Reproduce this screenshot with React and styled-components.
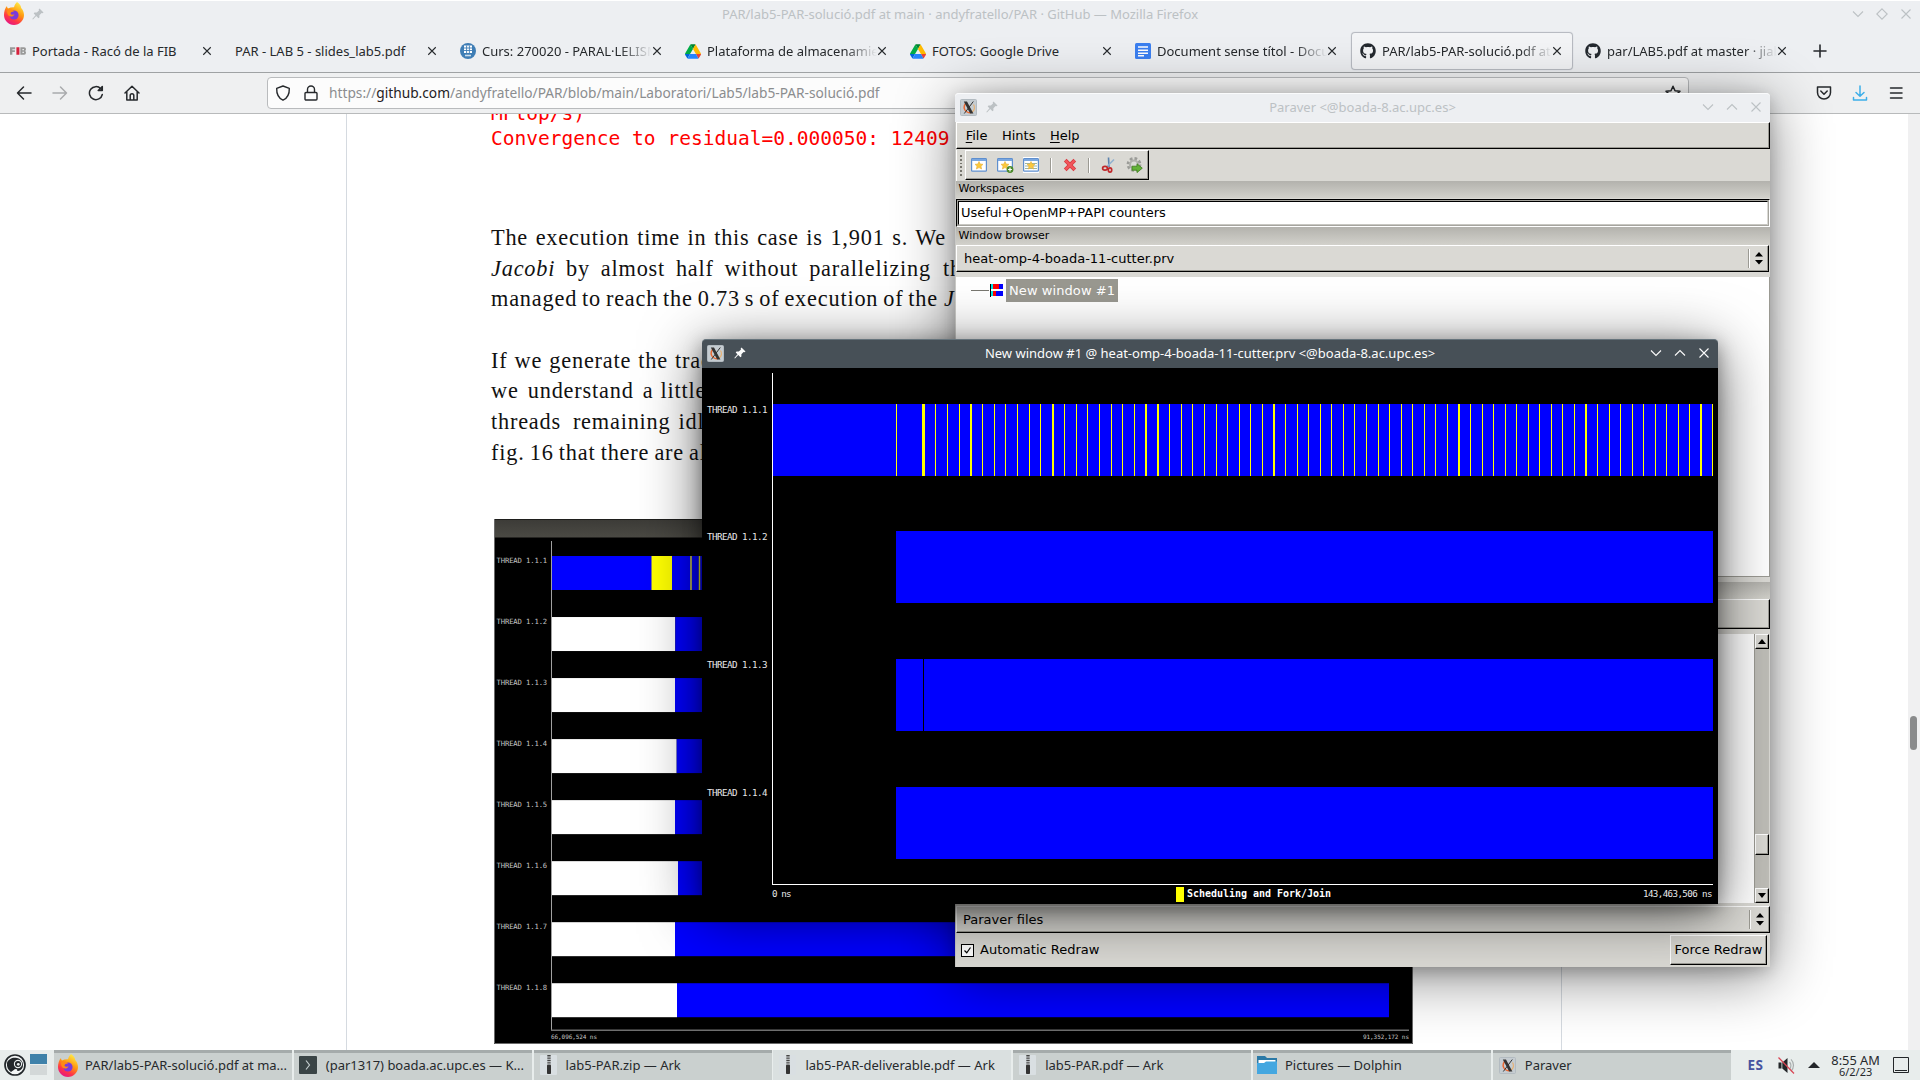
import React from "react";
import styled, { createGlobalStyle, css } from "styled-components";
import { FaGithub } from "react-icons/fa";

const Global = createGlobalStyle`
  *, *::before, *::after { box-sizing: border-box; }
  body { margin: 0; background: #fff; overflow: hidden; }
  svg { display: block; flex: none; }
`;

const sans = `"Noto Sans", "Open Sans", sans-serif`;
const dejavu = `"DejaVu Sans", sans-serif`;
const mono = `"DejaVu Sans Mono", monospace`;
const paper = "#dad9d4";

/* ---------- desktop ---------- */

const Desktop = styled.div`
  position: relative;
  width: 1920px;
  height: 1080px;
  overflow: hidden;
  display: flex;
  flex-direction: column;
  font: 13px/18px ${sans};
  color: #26292c;
  white-space: nowrap;
`;

/* ---------- browser ---------- */

const Browser = styled.div`
  height: 1050px;
  display: flex;
  flex-direction: column;
  background: #eff0f1;
`;

const BrowserTitle = styled.div`
  height: 30px;
  display: grid;
  grid-template-columns: 240px 1fr 236px;
  align-items: center;
  border-top: 1px solid #fff;
  background: #edeff2;
  padding: 0 8px 4px 4px;
  color: #bcc1c4;
  text-align: center;
`;

const TitleIcons = styled.div`
  display: flex;
  align-items: center;
  gap: ${(p) => p.$gap || 8}px;
  justify-content: ${(p) => (p.$end ? "flex-end" : "flex-start")};
`;

const TabStrip = styled.div`
  height: 43px;
  display: flex;
  padding: 2px 0 2px 1px;
  background: #edeff2;
  border-bottom: 1px solid #9fa2a4;
`;

const Tab = styled.div`
  width: 225px;
  height: 38px;
  flex: none;
  padding: 0 3px 0 9px;
  display: flex;
  align-items: center;
  gap: 6px;
  ${(p) =>
    p.$active &&
    css`
      background: #f3f4f6;
      border-radius: 4px;
      box-shadow: inset 0 0 0 1px #b8bbc2, 0 0 1px #b8bbc2;
      width: 222px;
      margin-right: 3px;
      padding-right: 0;
    `}
`;

const NewTab = styled.div`
  height: 38px;
  padding-left: 11px;
  display: flex;
  align-items: center;
`;

const TabLabel = styled.span`
  width: ${(p) => (p.$wide ? 192 : 170)}px;
  flex: none;
  overflow: hidden;
  ${(p) =>
    p.$fade &&
    css`
      mask-image: linear-gradient(to right, #000 138px, transparent 170px);
    `}
`;

const TabClose = styled.span`
  display: flex;
  width: 12px;
  margin-left: -6px;
`;

const NavBar = styled.div`
  height: 41px;
  display: flex;
  align-items: center;
  padding: 0 16px 0 16px;
  border-bottom: 1px solid #b8babb;
`;

const NavButtons = styled.div`
  display: flex;
  gap: 20px;
  width: 251px;
`;

const UrlBar = styled.div`
  width: 1422px;
  height: 32px;
  border: 1px solid #b9bbbd;
  border-radius: 4px;
  background: #fcfcfc;
  display: flex;
  align-items: center;
  gap: 12px;
  padding: 0 7px;
  font-size: 13.73px;
  color: #8b8d8f;
  b { font-weight: 400; color: #1f2123; }
`;

const UrlText = styled.span`
  margin-left: -2px;
`;

const Spring = styled.span`
  flex: 1;
`;

const NavRight = styled.div`
  margin-left: auto;
  display: flex;
  gap: 20px;
`;

const PageRow = styled.div`
  flex: 1;
  min-height: 0;
  display: flex;
  background: #fff;
`;

const Viewer = styled.div`
  width: 1216px;
  margin-left: 346px;
  padding-left: 144px;
  border: solid #d5dae0;
  border-width: 0 1px;
  overflow: hidden;
  display: flex;
  flex-direction: column;
`;

const ScrollTrack = styled.div`
  margin-left: auto;
  width: 12px;
  padding: 602px 3px 0 2px;
  background: #f0f0f1;
`;

const ScrollThumb = styled.div`
  width: 7px;
  height: 34px;
  border-radius: 4px;
  background: #8a8b8c;
`;

const CodeText = styled.div`
  height: 122px;
  margin-top: -13px;
  font: 19.55px/25px ${mono};
  color: #f00;
  flex: none;
`;

const Paragraph = styled.div`
  flex: none;
  margin-bottom: 31px;
  font: 22.3px/30.6px "Liberation Serif", "Times New Roman", serif;
  letter-spacing: 0.8px;
  word-spacing: -3px;
  color: #111;
`;

const Line = styled.div`
  display: flex;
  height: 30.6px;
`;

const Justified = styled.span`
  width: ${(p) => p.$w}px;
  flex: none;
  white-space: normal;
  text-align: justify;
  text-align-last: justify;
`;

const Tail = styled.span`
  margin-left: ${(p) => p.$gap}px;
`;

const Figure = styled.div`
  flex: none;
  width: 919px;
  height: 525px;
  margin: 19.8px 0 0 3px;
`;

/* ---------- shared window frame ---------- */

const Frame = styled.div`
  position: absolute;
  left: ${(p) => p.$x}px;
  top: ${(p) => p.$y}px;
  width: ${(p) => p.$w}px;
  height: ${(p) => p.$h}px;
  border-radius: 4px 4px 0 0;
  display: flex;
  flex-direction: column;
  box-shadow: ${(p) =>
    p.$active
      ? "0 5px 18px rgba(0,0,0,.35), 0 10px 60px rgba(0,0,0,.6)"
      : "0 4px 16px rgba(0,0,0,.2), 0 10px 60px rgba(0,0,0,.48)"};
`;

const FrameTitle = styled.div`
  height: 29px;
  flex: none;
  border-radius: 4px 4px 0 0;
  display: grid;
  grid-template-columns: 100px 1fr 97px;
  align-items: center;
  text-align: center;
  padding: 0 8px 2px 5px;
  background: ${(p) => (p.$active ? "#475057" : "#edeff2")};
  border-top: 1px solid ${(p) => (p.$active ? "#66747c" : "#fafbfc")};
  color: ${(p) => (p.$active ? "#fcfcfc" : "#bcc1c4")};
`;

/* ---------- paraver main window ---------- */

const raised = css`
  border: 1px solid #000;
  border-top-color: #fff;
  border-left-color: #fff;
  box-shadow: inset -1px -1px 0 #9b9a93;
`;

const Client = styled.div`
  flex: 1;
  min-height: 0;
  display: flex;
  flex-direction: column;
  background: ${paper};
  border-left: 1px solid #c9c9c6;
  font: 13px/18px ${dejavu};
  color: #000;
`;

const MenuBar = styled.div`
  height: 27px;
  ${raised}
  display: flex;
  gap: 14.5px;
  align-items: center;
  padding: 1px 0 0 8.7px;
  u { text-underline-offset: 2px; }
`;

const ToolRow = styled.div`
  height: 32px;
  display: flex;
  padding-top: 1px;
`;

const Grip = styled.div`
  width: 9px;
  padding: 5px 3px;
  display: flex;
  flex-direction: column;
  gap: 2px;
  border-left: 1px solid #fff;
`;

const Dot = styled.i`
  width: 2px;
  height: 2px;
  background: #77766f;
`;

const ToolBar = styled.div`
  width: 184px;
  height: 30px;
  ${raised}
  display: flex;
  align-items: center;
`;

const Tool = styled.div`
  width: 26.3px;
  flex: none;
  display: flex;
  justify-content: center;
`;

const ToolSep = styled.div`
  width: 2px;
  height: 15px;
  flex: none;
  margin: 0 5px;
  border-left: 1px solid #9b9a93;
  border-right: 1px solid #fff;
`;

const Caption = styled.div`
  height: ${(p) => p.$h}px;
  flex: none;
  padding: ${(p) => p.$h - 17}px 0 0 2.5px;
  background: linear-gradient(#b3b2ad, #d2d1cb);
  font-size: 11px;
  line-height: 15px;
`;

const Field = styled.div`
  height: 28px;
  flex: none;
  margin-top: 1px;
  border: 1px solid #000;
  border-right-color: #fff;
  border-bottom-color: #fff;
  padding: 1px;
  background: #a5a49e;
`;

const FieldInner = styled.div`
  height: 100%;
  background: #fff;
  border: 1px solid #000;
  border-right-color: ${paper};
  border-bottom-color: #c8c7c2;
  padding: 1px 0 0 2px;
  line-height: 20px;
`;

const Choice = styled.div`
  height: ${(p) => p.$h}px;
  flex: none;
  margin-right: ${(p) => (p.$flush ? 0 : 1)}px;
  ${raised}
  display: flex;
  align-items: center;
  padding: 0 5.5px 0 ${(p) => p.$pad}px;
`;

const ChoiceArrows = styled.div`
  margin-left: auto;
  height: 19px;
  border-left: 1px solid #9b9a93;
  box-shadow: inset 1px 0 0 #fff;
  padding-left: 6px;
  display: flex;
  align-items: center;
`;

const Tree = styled.div`
  height: 300px;
  flex: none;
  margin: 5px 0 5px;
  background: #fff;
  border-right: 1px solid #9b9a93;
  border-bottom: 1px solid #9b9a93;
  padding: 2px 0 0 15px;
`;

const TreeRow = styled.div`
  display: flex;
  align-items: center;
  height: 23px;
`;

const TreeLabel = styled.span`
  height: 23px;
  width: 112px;
  margin-left: 3px;
  padding-left: 3px;
  line-height: 23px;
  letter-spacing: 0.08px;
  background: #999890;
  color: #fff;
`;

const FileList = styled.div`
  height: 269px;
  flex: none;
  margin: 5px 1px 3px 0;
  background: #fff;
  display: flex;
  justify-content: flex-end;
`;

const GtkScroll = styled.div`
  width: 15px;
  display: flex;
  flex-direction: column;
  justify-content: space-between;
  background: #bfbeb8;
  border-left: 1px solid #9b9a93;
`;

const GtkButton = styled.div`
  height: ${(p) => p.$h}px;
  ${raised}
  background: ${paper};
  display: flex;
  align-items: center;
  justify-content: center;
  ${(p) => p.$thumb && css`margin-top: 166px; margin-bottom: 14px;`}
`;

const Footer = styled.div`
  flex: 1;
  display: flex;
  align-items: flex-start;
  padding: 2px 3px 0 5px;
`;

const CheckLabel = styled.div`
  display: flex;
  align-items: center;
  gap: 6px;
  height: 30px;
`;

const CheckBox = styled.div`
  width: 13px;
  height: 13px;
  border: 1px solid #000;
  background: #fff;
  display: flex;
  align-items: center;
  justify-content: center;
`;

const PushButton = styled.div`
  margin-left: auto;
  width: 97px;
  height: 30px;
  ${raised}
  display: flex;
  align-items: center;
  justify-content: center;
`;

/* ---------- taskbar ---------- */

const Taskbar = styled.div`
  height: 30px;
  display: flex;
  background: #e8edec;
`;

const Launcher = styled.div`
  width: 54px;
  display: flex;
  align-items: center;
  gap: 4px;
  padding: 0 0 1px 4px;
`;

const Pager = styled.div`
  display: grid;
  gap: 1px;
  width: 17px;
`;

const Desk = styled.i`
  height: 10px;
  background: ${(p) => (p.$on ? "#3f82aa" : "#d3d8d8")};
`;

const Task = styled.div`
  width: 238px;
  margin-right: 1.8px;
  height: 30px;
  display: flex;
  align-items: center;
  gap: 7px;
  padding: 0 5px 3px 4px;
  flex: none;
  background: ${(p) => (p.$light ? "#dae0e0" : "#cad0cf")};
  border-top: 3px solid ${(p) => (p.$light ? "#dae0e0" : "#a5abab")};
`;

const TaskIcon = styled.span`
  width: 21px;
  display: flex;
  justify-content: center;
`;

const Tray = styled.div`
  flex: 1;
  display: flex;
  align-items: center;
  padding-left: 15px;
  b { color: #4653a0; width: 30px; font-size: 13.5px; letter-spacing: 0.4px; }
`;

const Expander = styled.svg`
  margin-left: 13px;
`;

const Clock = styled.div`
  width: 58px;
  margin: 0 8px 0 7px;
  text-align: center;
  font-size: 12.8px;
  line-height: 13px;
  small { display: block; font-size: 11px; line-height: 10px; }
`;

/* ---------- icons ---------- */

const Firefox = ({ s = 20 }) => (
  <svg width={s} height={s * 1.15} viewBox="0 0 20 23">
    <defs>
      <linearGradient id="fx" x1="0.8" y1="0" x2="0.3" y2="1">
        <stop offset="0" stopColor="#fff44f" />
        <stop offset="0.45" stopColor="#ff980e" />
        <stop offset="0.75" stopColor="#ff3647" />
        <stop offset="1" stopColor="#e31587" />
      </linearGradient>
    </defs>
    <path fill="url(#fx)" d="M13 0c3 2 4 4 4.200 6C19 8 20 10.500 20 13c0 5.500-4.500 10-10 10S0 18.500 0 13c0-3.500 1-7 3-9 0 1 .5 2 1 2.500C6 5.500 8 5 10 5.200 10.500 3 11.500 1.500 13 0z" />
    <circle cx="10" cy="13" r="4.600" fill="#7a3bdc" />
    <path fill="#ff8a16" d="M3 9c2-2 5-2 7 .5-2 0-3.500.8-3.500 2.200 1 1.300 3 1 4 .6-1 2.500-4 3-6 1.200C3.500 12.500 3 10.500 3 9z" />
  </svg>
);

const Pin = ({ c = "#bcc1c4" }) => (
  <svg width="12" height="12" viewBox="0 0 12 12" fill={c}>
    <path d="M7.500 0.500 11.500 4.500 10.500 5.300 9.600 5 7.400 7.200 7.400 9.600 6.500 10.300 4.200 8 1 11.500 0.300 11 3.500 7.300 1.700 5.500 2.500 4.600 4.800 4.600 7 2.400 6.700 1.400z" />
  </svg>
);

const Glyph = ({ d, c = "#bcc1c4", s = 12, w = 1.1 }) => (
  <svg width={s} height={s} viewBox="0 0 12 12" fill="none" stroke={c} strokeWidth={w}>
    <path d={d} />
  </svg>
);
const DOWN = "M1 3.500 6 8.500 11 3.500";
const UP = "M1 8.500 6 3.500 11 8.500";
const CROSS = "M1.500 1.500 10.500 10.500M10.500 1.500 1.500 10.500";
const DIAMOND = "M6 0.800 11.200 6 6 11.200 0.800 6z";

const XLogo = () => (
  <svg width="17" height="17" viewBox="0 0 17 17">
    <rect x="0.500" y="0.500" width="16" height="16" rx="1" fill="#c5ccd1" stroke="#b3bbc1" />
    <path d="M7 3.500A5 5 0 1 0 12 13" fill="none" stroke="#ea6a35" strokeWidth="1.500" />
    <path d="M13.500 5.500a5.200 5.200 0 0 1-1.500 7.500" fill="none" stroke="#e9b070" strokeWidth="1.200" />
    <path d="M3.800 2.500h3.200l6.400 12h-3.200z" fill="#333" />
    <path d="M13.300 2.500 4.300 14.500" stroke="#333" strokeWidth="1" />
  </svg>
);

const Fib = () => (
  <svg width="16" height="8" viewBox="0 0 17 8">
    <path fill="#999" d="M0 0h5.500v2.200H2.500v.9h2.700V5H2.500v3H0zM11 0h4q2 0 2 2 0 1.300-.8 1.900.8.6.8 2 0 2.100-2 2.100h-4zM13.200 1.900v1.200h1.600V1.900zM13.200 4.900v1.300h1.600V4.900z" fillRule="evenodd" />
    <path fill="#d6213c" d="M6.800 0h3.200v8H6.800z" />
  </svg>
);

const Upc = () => (
  <svg width="16" height="16" viewBox="0 0 16 16">
    <circle cx="8" cy="8" r="8" fill="#3e7db5" />
    <path d="M4 2.500h8v7.500H4z" fill="#fff" />
    <path d="M6.600 2.500v7.500M9.400 2.500v7.500M4 5h8M4 7.500h8" stroke="#3e7db5" strokeWidth="0.900" />
    <path d="M5 12.500h6" stroke="#c9dceb" strokeWidth="1.600" />
  </svg>
);

const Drive = () => (
  <svg width="16" height="15" viewBox="0 0 87.300 78">
    <path d="m6.600 66.850 3.850 6.650c.8 1.400 1.950 2.500 3.300 3.300l13.750-23.800h-27.500c0 1.550.4 3.100 1.200 4.500z" fill="#0066da" />
    <path d="m43.650 25-13.750-23.800c-1.350.8-2.500 1.900-3.300 3.300l-25.400 44a9.060 9.060 0 0 0-1.200 4.500h27.500z" fill="#00ac47" />
    <path d="m73.550 76.800c1.350-.8 2.500-1.900 3.300-3.300l1.600-2.750 7.650-13.250c.8-1.400 1.200-2.950 1.200-4.500h-27.500l5.850 11.500z" fill="#ea4335" />
    <path d="m43.650 25 13.750-23.800c-1.350-.8-2.900-1.200-4.500-1.200h-18.500c-1.600 0-3.150.45-4.500 1.200z" fill="#00832d" />
    <path d="m59.800 53h-32.300l-13.750 23.800c1.350.8 2.900 1.200 4.500 1.200h50.800c1.600 0 3.150-.45 4.500-1.200z" fill="#2684fc" />
    <path d="m73.400 26.500-12.700-22c-.8-1.400-1.950-2.500-3.300-3.300l-13.750 23.800 16.150 28h27.450c0-1.550-.4-3.100-1.200-4.500z" fill="#ffba00" />
  </svg>
);

const Docs = () => (
  <svg width="16" height="16" viewBox="0 0 16 16">
    <rect width="16" height="16" rx="1.500" fill="#3b7ff0" />
    <path d="M3 4h10M3 7.200h10M3 10.200h10M3 12.800h6" stroke="#fff" strokeWidth="1.500" />
  </svg>
);

const Stroke = ({ children, c = "#26292c", w = 16, h = 16, sw = 1.5 }) => (
  <svg width={w} height={h} viewBox="0 0 16 16" fill="none" stroke={c} strokeWidth={sw} strokeLinecap="round" strokeLinejoin="round">
    {children}
  </svg>
);

const UpDown = () => (
  <svg width="8" height="13" viewBox="0 0 8 13">
    <path d="M0 4.500 4 0l4 4.500zM0 8h8l-4 4.500z" />
  </svg>
);

const Caret = ({ up }) => (
  <svg width="8" height="5" viewBox="0 0 8 5">
    <path d={up ? "M0 5h8L4 0z" : "M0 0h8L4 5z"} />
  </svg>
);

const STAR = "M8 4.500 9.200 7 12 7.300 10 9.200 10.600 12 8 10.600 5.400 12 6 9.200 4 7.300 6.800 7z";

const WindowIcon = ({ plus, framed }) => (
  <svg width="17" height="16" viewBox="0 0 17 16">
    {framed && <path d="M0 0h16v16H0z" fill="#fff" />}
    <rect x="0.600" y="1.600" width="14.800" height="12.600" rx="0.800" fill="#fff" stroke="#5f8fce" strokeWidth="1.200" />
    <path d="M1 2h14v2H1z" fill="#7aa7e0" />
    {framed && <path d="M2 6.500h12M2 9h12M2 11.500h12" stroke="#9db7a0" strokeWidth="1" />}
    <path d={STAR} fill="#fbc93c" stroke="#e6ae3c" strokeWidth="0.600" />
    {plus && <circle cx="13" cy="12.500" r="3.400" fill="#4b8a2a" />}
    {plus && <path d="M13 10.600v3.800M11.100 12.500h3.800" stroke="#fff" strokeWidth="1.200" />}
  </svg>
);

const RedX = () => (
  <svg width="14" height="14" viewBox="0 0 14 14">
    <path d="M2.200 2.200 11.800 11.800M11.800 2.200 2.200 11.800" stroke="#d93a40" strokeWidth="3.800" />
    <path d="M2.500 2.500 11.500 11.500M11.500 2.500 2.500 11.500" stroke="#f2575c" strokeWidth="2.200" />
  </svg>
);

const Scissors = () => (
  <svg width="15" height="16" viewBox="0 0 15 16" fill="none">
    <path d="M7.500 0.500 8 10" stroke="#5c83ae" strokeWidth="1.600" />
    <path d="M13 2.500 6 9.500" stroke="#8fb0cf" strokeWidth="1.600" />
    <ellipse cx="4" cy="11.300" rx="2.400" ry="1.900" stroke="#c0282b" strokeWidth="1.700" />
    <ellipse cx="9" cy="13" rx="1.700" ry="2.100" stroke="#c0282b" strokeWidth="1.700" />
  </svg>
);

const Gear = () => (
  <svg width="17" height="16" viewBox="0 0 17 16">
    <circle cx="8" cy="7.500" r="5.900" fill="none" stroke="#9b9c98" strokeWidth="3" strokeDasharray="2.600 2" />
    <circle cx="8" cy="7.500" r="4" fill="#dcdcd8" stroke="#b0b1ac" strokeWidth="2.200" />
    <path d="M6 9.200h5V6.800l5.300 4.400-5.300 4.400v-2.400H6z" fill="#63b238" stroke="#3c7c1d" strokeWidth="0.800" />
  </svg>
);

const TreeMark = () => (
  <svg width="32" height="13" viewBox="0 0 32 13" shapeRendering="crispEdges">
    <path d="M0 6h18v1H0z" fill="#77766f" />
    <path d="M19 0h1v13h-1z" fill="#000" />
    <path d="M20 0h2v5h-2zM20 7h2v5h-2z" fill="#00e5e5" />
    <path d="M22 0h6v5h-6zM22 7h3v5h-3z" fill="#f00" />
    <path d="M28 0h4v5h-4zM25 7h7v5h-7z" fill="#00f" />
  </svg>
);

const Zip = () => (
  <svg width="17" height="20" viewBox="0 0 17 20">
    <rect width="17" height="20" rx="1" fill="#d9dfe2" />
    <path d="M9 0v12" stroke="#444" strokeWidth="3.400" strokeDasharray="1.400 1" />
    <rect x="7" y="10" width="4" height="9" rx="0.800" fill="#333" />
  </svg>
);

const Konsole = () => (
  <svg width="18" height="18" viewBox="0 0 18 18">
    <rect width="18" height="18" rx="1" fill="#3a4446" />
    <path d="M7 4.500 10.500 9 7 13.500" fill="none" stroke="#c3cccd" strokeWidth="1.200" />
  </svg>
);

const Folder = () => (
  <svg width="20" height="18" viewBox="0 0 20 18">
    <path d="M0 0h8l2 2h10v8H0z" fill="#2b79a6" />
    <path d="M1.500 4h17v5h-17z" fill="#fff" />
    <path d="M0 7h7l2-1.500h11V18H0z" fill="#44a7e0" />
  </svg>
);

const Gecko = () => (
  <svg width="22" height="22" viewBox="0 0 22 22">
    <circle cx="11" cy="11" r="10" fill="#f3f6f6" stroke="#22272a" strokeWidth="1.700" />
    <path d="M3 9c1-4 6-6 10-5 3 .5 6 3 6 7 0 4-3 6-6 6 1-1 0-2-1-2-2 0-3 2-5 3-3-2-4.500-5-4-9z" fill="#22272a" />
    <circle cx="14" cy="10" r="3.600" fill="none" stroke="#e9eeee" strokeWidth="1.100" />
    <circle cx="14.300" cy="10.300" r="1.400" fill="#e9eeee" />
  </svg>
);

const Muted = () => (
  <svg width="17" height="17" viewBox="0 0 17 17">
    <path d="M0.500 5.500h3v6h-3zM4.300 5.500 9.500 1v15L4.300 11.500z" fill="#232629" />
    <path d="M11.500 5a5 5 0 0 1 0 7M13 2.300a8.500 8.500 0 0 1 0 12" fill="none" stroke="#a9aeae" strokeWidth="1.200" />
    <path d="M0.500 0.500 16 16.500" stroke="#da4453" strokeWidth="1.200" />
  </svg>
);

/* ---------- charts ---------- */

const forkJoin = [
  896, [922, 3], 935, 947, 959, [970, 2], 982, 994, 1005, 1017, 1029, 1040, [1052, 2], 1064, 1076, 1087, 1099, 1111,
  1122, 1134, [1145, 2], [1157, 2], 1169, 1181, 1192, 1204, 1216, 1227, 1239, 1250, 1262, [1273, 2], 1285, 1297, 1308,
  1320, 1331, 1343, 1354, 1366, 1378, 1389, 1401, 1412, 1424, 1435, 1447, [1458, 2], 1470, 1482, 1493, 1505, 1516,
  1528, 1539, 1551, 1562, 1574, [1585, 2], 1597, 1609, 1620, 1632, 1643, 1655, 1666, 1678, 1689, [1700, 2], 1712,
].map((v) => (Array.isArray(v) ? v : [v, 1]));

const Plot = styled.svg`
  font-family: ${mono};
  text { white-space: pre; }
`;

const Timeline = () => (
  <Plot width="1016" height="536" viewBox="702 368 1016 536">
    <rect x="702" y="368" width="1016" height="536" fill="#000" />
    <g fill="#e8e8e8" fontSize="9.200">
      {[412.5, 540, 667.8, 795.6].map((y, i) => (
        <text key={y} x="707" y={y} textLength="60.500">{`THREAD 1.1.${i + 1}`}</text>
      ))}
      <text x="772" y="897" textLength="19.500">0 ns</text>
      <text x="1643" y="897" textLength="69.500">143,463,506 ns</text>
    </g>
    <g shapeRendering="crispEdges">
      <rect x="773" y="404" width="940" height="72" fill="#00f" />
      {forkJoin.map(([x, w]) => (
        <rect key={x} x={x} y="404" width={w} height="72" fill="#ff0" />
      ))}
      {[531, 659, 787].map((y) => (
        <rect key={y} x="896" y={y} width="817" height="72" fill="#00f" />
      ))}
      <rect x="923" y="659" width="1" height="72" fill="#000" />
      <path d="M772 373h1v511h940v1H772z" fill="#fff" />
      <rect x="1176" y="887" width="8" height="15" fill="#ff0" />
    </g>
    <text x="1187" y="897" fill="#fff" fontSize="10" fontWeight="700" textLength="144">Scheduling and Fork/Join</text>
  </Plot>
);

const idle = [0, 675.3, 675, 676.7, 675, 678, 675, 677];

const OldTrace = () => (
  <Plot width="919" height="525" viewBox="494 519 919 525">
    <defs>
      <linearGradient id="hd" x1="0" y1="0" x2="0" y2="1">
        <stop offset="0" stopColor="#3c3b37" />
        <stop offset="1" stopColor="#4b4a44" />
      </linearGradient>
    </defs>
    <rect x="494" y="519" width="919" height="525" fill="#000" />
    <rect x="494" y="519.500" width="919" height="18" fill="url(#hd)" />
    <path d="M494.500 519v524.500h918V537" fill="none" stroke="#6a6a6a" />
    {idle.map((x, i) => {
      const y = 556 + i * 61.03;
      return (
        <g key={i}>
          <text x="496.500" y={y + 6.5} fontSize="7.200" fill="#c4c4c4" textLength="50.700">{`THREAD 1.1.${i + 1}`}</text>
          {i > 0 && <rect x="552" y={y} width={x - 552} height="34" fill="#fff" />}
          <rect x={i ? x : 552} y={y} width={1389 - (i ? x : 552)} height="34" fill="#00f" />
        </g>
      );
    })}
    <rect x="651.500" y="556" width="20.500" height="34" fill="#ff0" />
    <path d="M691 556v34M699.500 556v34" stroke="#f4f020" strokeWidth="1.400" />
    <path d="M551.500 541v489.500" stroke="#a0a0a0" />
    <path d="M551 1030.200H1409" stroke="#6e6e6e" strokeWidth="1.600" />
    <text x="551" y="1038.800" fontSize="6" fill="#c8c8c8" textLength="46">66,096,524 ns</text>
    <text x="1363" y="1038.800" fontSize="6" fill="#c8c8c8" textLength="46">91,352,172 ns</text>
  </Plot>
);

/* ---------- page ---------- */

const tabs = [
  { icon: <Fib />, label: "Portada - Racó de la FIB" },
  { label: "PAR - LAB 5 - slides_lab5.pdf" },
  { icon: <Upc />, label: "Curs: 270020 - PARAL·LELISM", fade: true },
  { icon: <Drive />, label: "Plataforma de almacenamien", fade: true },
  { icon: <Drive />, label: "FOTOS: Google Drive" },
  { icon: <Docs />, label: "Document sense títol - Docum", fade: true },
  { icon: <FaGithub size={16} color="#24292f" />, label: "PAR/lab5-PAR-solució.pdf at m", fade: true, active: true },
  { icon: <FaGithub size={16} color="#24292f" />, label: "par/LAB5.pdf at master · jiab", fade: true },
];

const tasks = [
  { icon: <Firefox s={20} />, label: "PAR/lab5-PAR-solució.pdf at ma..." },
  { icon: <Konsole />, label: "(par1317) boada.ac.upc.es — K..." },
  { icon: <Zip />, label: "lab5-PAR.zip — Ark" },
  { icon: <Zip />, label: "lab5-PAR-deliverable.pdf — Ark", light: true },
  { icon: <Zip />, label: "lab5-PAR.pdf — Ark" },
  { icon: <Folder />, label: "Pictures — Dolphin" },
  { icon: <XLogo />, label: "Paraver" },
];

const FrameButtons = ({ c }) => (
  <TitleIcons $end $gap={12}>
    <Glyph d={DOWN} c={c} />
    <Glyph d={UP} c={c} />
    <Glyph d={CROSS} c={c} />
  </TitleIcons>
);

const FirefoxWindow = () => (
  <Browser>
    <BrowserTitle>
      <TitleIcons $gap={8}><Firefox s={20} /><Pin /></TitleIcons>
      <span>PAR/lab5-PAR-solució.pdf at main · andyfratello/PAR · GitHub — Mozilla Firefox</span>
      <TitleIcons $end $gap={12}>
        <Glyph d={DOWN} /><Glyph d={DIAMOND} /><Glyph d={CROSS} />
      </TitleIcons>
    </BrowserTitle>
    <TabStrip>
      {tabs.map((t) => (
        <Tab key={t.label} $active={t.active}>
          {t.icon}
          <TabLabel $fade={t.fade} $wide={!t.icon}>{t.label}</TabLabel>
          <TabClose><Glyph d={CROSS} c="#26292c" s={10} w={1.3} /></TabClose>
        </Tab>
      ))}
      <NewTab><Stroke sw={1.6}><path d="M8 2v12M2 8h12" /></Stroke></NewTab>
    </TabStrip>
    <NavBar>
      <NavButtons>
        <Stroke><path d="M15 8H1.500M7.500 2 1.500 8l6 6" /></Stroke>
        <Stroke c="#a9abad"><path d="M1 8h13.500M8.500 2l6 6-6 6" /></Stroke>
        <Stroke><path d="M14.300 9.500A6.500 6.500 0 1 1 12.800 3.800L14 5M14.300 1.500V5.500H10.200z" /></Stroke>
        <Stroke><path d="M1 8 8 1.200 15 8M2.800 6.800V15h10.400V6.800M6.200 15v-4.500a1.800 1.800 0 0 1 3.600 0V15" /></Stroke>
      </NavButtons>
      <UrlBar>
        <Stroke sw={1.4}><path d="M8 1 14.300 3.400C14.500 9 12.500 13 8 15.200 3.500 13 1.500 9 1.700 3.400z" /></Stroke>
        <Stroke sw={1.4}><path d="M3 7.500h10a1 1 0 0 1 1 1V14a1 1 0 0 1-1 1H3a1 1 0 0 1-1-1V8.500a1 1 0 0 1 1-1zM4.500 7.500V4.500a3.500 3.500 0 0 1 7 0V7.500" /></Stroke>
        <UrlText>https://<b>github.com</b>/andyfratello/PAR/blob/main/Laboratori/Lab5/lab5-PAR-solució.pdf</UrlText>
        <Spring />
        <Stroke><path d="M8 1.300 10 5.800l5 .5-3.700 3.300 1.100 4.900L8 12l-4.400 2.500 1.100-4.900L1 6.300l5-.5z" /></Stroke>
      </UrlBar>
      <NavRight>
        <Stroke><path d="M1.500 2h13v5.500a6.500 6.500 0 0 1-13 0zM4.800 6 8 9.200 11.200 6" /></Stroke>
        <Stroke c="#3daee9"><path d="M8 1v10M4 7.500 8 11.300l4-3.800M1.500 12.500V15h13v-2.500" /></Stroke>
        <Stroke><path d="M2.500 3h11.500M2.500 8h11.500M2.500 13h11.500" /></Stroke>
      </NavRight>
    </NavBar>
    <PageRow>
      <Viewer>
        <CodeText>
          <div>MFlop/s)</div>
          <div>Convergence to residual=0.000050: 12409</div>
        </CodeText>
        <Paragraph>
          <Line><Justified $w={455}>The execution time in this case is 1,901 s. We</Justified><Tail $gap={9}>have</Tail></Line>
          <Line><Justified $w={440}><i>Jacobi</i> by almost half without parallelizing</Justified><Tail $gap={12}>the</Tail></Line>
          <Line><Justified $w={447}>managed to reach the 0.73 s of execution of the</Justified><Tail $gap={6}><i>Jacobi</i></Tail></Line>
        </Paragraph>
        <Paragraph>
          <Line><Justified $w={177}>If we generate the</Justified><Tail $gap={7}>trace</Tail></Line>
          <Line><Justified $w={162.500}>we understand a</Justified><Tail $gap={7}>little</Tail></Line>
          <Line><Justified $w={179.500}>threads remaining</Justified><Tail $gap={8}>idle</Tail></Line>
          <Line><Justified $w={193}>fig. 16 that there are</Justified><Tail $gap={5}>also</Tail></Line>
        </Paragraph>
        <Figure><OldTrace /></Figure>
      </Viewer>
      <ScrollTrack><ScrollThumb /></ScrollTrack>
    </PageRow>
  </Browser>
);

const ParaverWindow = () => (
  <Frame $x={955} $y={93} $w={815} $h={874}>
    <FrameTitle>
      <TitleIcons $gap={9}><XLogo /><Pin /></TitleIcons>
      <span>Paraver &lt;@boada-8.ac.upc.es&gt;</span>
      <FrameButtons />
    </FrameTitle>
    <Client>
      <MenuBar>
        <span><u>F</u>ile</span><span>Hints</span><span><u>H</u>elp</span>
      </MenuBar>
      <ToolRow>
        <Grip>{[0, 1, 2, 3, 4, 5].map((i) => <Dot key={i} />)}</Grip>
        <ToolBar>
          <Tool><WindowIcon /></Tool>
          <Tool><WindowIcon plus /></Tool>
          <Tool><WindowIcon framed /></Tool>
          <ToolSep />
          <Tool><RedX /></Tool>
          <ToolSep />
          <Tool><Scissors /></Tool>
          <Tool><Gear /></Tool>
        </ToolBar>
      </ToolRow>
      <Caption $h={17}>Workspaces</Caption>
      <Field><FieldInner>Useful+OpenMP+PAPI counters</FieldInner></Field>
      <Caption $h={18}>Window browser</Caption>
      <Choice $h={27} $pad={7}>heat-omp-4-boada-11-cutter.prv<ChoiceArrows><UpDown /></ChoiceArrows></Choice>
      <Tree>
        <TreeRow><TreeMark /><TreeLabel>New window #1</TreeLabel></TreeRow>
      </Tree>
      <Caption $h={17} />
      <Choice $h={30} $pad={7} $flush />
      <FileList>
        <GtkScroll>
          <GtkButton $h={15}><Caret up /></GtkButton>
          <GtkButton $h={21} $thumb />
          <GtkButton $h={15}><Caret /></GtkButton>
        </GtkScroll>
      </FileList>
      <Choice $h={27} $pad={6} $flush>Paraver files<ChoiceArrows><UpDown /></ChoiceArrows></Choice>
      <Footer>
        <CheckLabel>
          <CheckBox><Glyph d="M2 6 5 9 10 2" c="#000" s={9} w={1.6} /></CheckBox>
          Automatic Redraw
        </CheckLabel>
        <PushButton>Force Redraw</PushButton>
      </Footer>
    </Client>
  </Frame>
);

const TimelineWindow = () => (
  <Frame $active $x={702} $y={339} $w={1016} $h={565}>
    <FrameTitle $active>
      <TitleIcons $gap={10}><XLogo /><Pin c="#fcfcfc" /></TitleIcons>
      <span>New window #1 @ heat-omp-4-boada-11-cutter.prv &lt;@boada-8.ac.upc.es&gt;</span>
      <FrameButtons c="#fcfcfc" />
    </FrameTitle>
    <Timeline />
  </Frame>
);

export default function App() {
  return (
    <Desktop>
      <Global />
      <FirefoxWindow />
      <ParaverWindow />
      <TimelineWindow />
      <Taskbar>
        <Launcher>
          <Gecko />
          <Pager><Desk $on /><Desk /></Pager>
        </Launcher>
        {tasks.map((t) => (
          <Task key={t.label} $light={t.light}>
            <TaskIcon>{t.icon}</TaskIcon>
            {t.label}
          </Task>
        ))}
        <Tray>
          <b>ES</b>
          <Muted />
          <Expander width="12" height="6" viewBox="0 0 12 6"><path d="M0 6h12L6 0z" fill="#232629" /></Expander>
          <Clock>8:55 AM<small>6/2/23</small></Clock>
          <svg width="16" height="16" viewBox="0 0 16 16" fill="none" stroke="#232629"><path d="M0.500 0.500h15v15H0.500zM2 13.500h12" /></svg>
        </Tray>
      </Taskbar>
    </Desktop>
  );
}
